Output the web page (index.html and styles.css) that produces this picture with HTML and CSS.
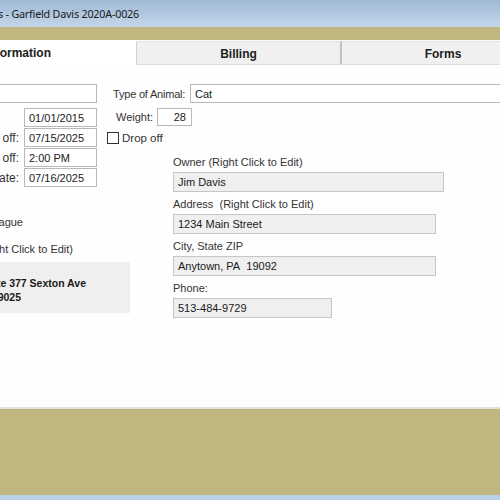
FILE: index.html
```html
<!DOCTYPE html>
<html>
<head>
<meta charset="utf-8">
<link rel="stylesheet" href="styles.css">
</head>
<body>
<div class="window">
  <div class="titlebar"><div class="title-wrap"><span class="title">Pet Records - Garfield Davis 2020A-0026</span></div></div>
  <div class="band"></div>
  <div class="tabs">
    <div class="tab active"><span class="tab-text">Pet Information</span></div>
    <div class="tab">Billing</div>
    <div class="tab last">Forms</div>
  </div>
  <div class="content">
    <div class="leftcol">
      <div class="box white wide"></div>
      <div class="dates">
        <div class="daterow"><span class="dlabel"></span><span class="box white date">01/01/2015</span></div>
        <div class="daterow"><span class="dlabel">Date of Drop off:</span><span class="box white date">07/15/2025</span></div>
        <div class="daterow"><span class="dlabel">Time of Drop off:</span><span class="box white date">2:00 PM</span></div>
        <div class="daterow"><span class="dlabel">Pickup Date:</span><span class="box white date">07/16/2025</span></div>
      </div>
      <div class="ltext league"><span>League</span></div>
      <div class="ltext vet"><span>Vet (Right Click to Edit)</span></div>
      <div class="vetbox">
        <div class="vline one"><span>Suite 377 Sexton Ave</span></div>
        <div class="vline two"><span>Horsham, PA 19025</span></div>
      </div>
    </div>
    <div class="rightcol">
      <div class="animalrow">
        <span class="label">Type of Animal:</span>
        <span class="box white animal">Cat</span>
      </div>
      <div class="weightrow">
        <span class="label">Weight:</span>
        <span class="box white weight">28</span>
      </div>
      <div class="droprow">
        <span class="check"></span>
        <span class="label">Drop off</span>
      </div>
      <div class="owner">
        <div class="group">
          <div class="label glabel">Owner (Right Click to Edit)</div>
          <div class="box gray long">Jim Davis</div>
        </div>
        <div class="group">
          <div class="label glabel">Address&nbsp; (Right Click to Edit)</div>
          <div class="box gray mid">1234 Main Street</div>
        </div>
        <div class="group">
          <div class="label glabel">City, State ZIP</div>
          <div class="box gray mid">Anytown, PA&nbsp; 19092</div>
        </div>
        <div class="group">
          <div class="label glabel">Phone:</div>
          <div class="box gray short">513-484-9729</div>
        </div>
      </div>
    </div>
  </div>
  <div class="footer"></div>
  <div class="taskbar"></div>
</div>
</body>
</html>
```
FILE: styles.css
```css
html, body {
  margin: 0;
  padding: 0;
  width: 500px;
  height: 500px;
  overflow: hidden;
  background: #ffffff;
}

.window {
  width: 500px;
  height: 500px;
  display: flex;
  flex-direction: column;
  font-family: "Liberation Sans", Arial, sans-serif;
  color: #1e1e1e;
}

.titlebar {
  height: 27px;
  flex: none;
  background: linear-gradient(#9fb9d5, #c4d6ea);
  display: flex;
  align-items: center;
  overflow: hidden;
}

.title-wrap {
  width: 139px;
  flex: none;
  display: flex;
  justify-content: flex-end;
}

.title {
  font-family: "Noto Sans", "Open Sans", sans-serif;
  font-size: 10.75px;
  letter-spacing: -0.2px;
  color: #1a1a1a;
  white-space: nowrap;
  flex: none;
  margin-top: 1px;
}

.band {
  height: 13px;
  flex: none;
  background: #c0b680;
}

.tabs {
  height: 25px;
  flex: none;
  display: flex;
  background: #fdfdfd;
  overflow: hidden;
}

.tab {
  width: 204px;
  flex: none;
  box-sizing: border-box;
  background: #f0f0f0;
  border-top: 1px solid #e4e4e4;
  border-bottom: 1px solid #dedede;
  border-left: 1px solid #d4d4cc;
  margin-top: 1px;
  font-size: 12px;
  font-weight: bold;
  color: #202020;
  display: flex;
  align-items: center;
  justify-content: center;
  padding-top: 2px;
}

.tab.last {
  border-left: 2px solid #c4c4b4;
}

.tab.active {
  width: 204px;
  margin-left: -68px;
  margin-top: 0;
  background: #ffffff;
  border: none;
  justify-content: flex-start;
  padding-top: 0;
}

.tab-text {
  width: 119px;
  flex: none;
  display: flex;
  justify-content: flex-end;
  white-space: nowrap;
}

.content {
  height: 342px;
  flex: none;
  background: #fefefe;
  display: flex;
  gap: 10px;
  padding-top: 19px;
  box-sizing: border-box;
}

.box {
  box-sizing: border-box;
  border: 1px solid #b9b9b9;
  font-size: 11px;
  color: #1a1a1a;
  display: flex;
  align-items: center;
  padding-left: 4px;
  white-space: nowrap;
}

.box.white {
  background: #ffffff;
}

.box.gray {
  background: #efefef;
  border-color: #c6c6c6;
}

.leftcol {
  width: 157px;
  margin-left: -60px;
  flex: none;
  display: flex;
  flex-direction: column;
}

.box.wide {
  height: 19px;
  width: 157px;
  margin-bottom: 5px;
}

.dates {
  display: flex;
  flex-direction: column;
  gap: 1px;
}

.daterow {
  display: flex;
  align-items: center;
}

.dlabel {
  width: 84px;
  flex: none;
  display: flex;
  justify-content: flex-end;
  font-size: 12px;
  color: #333;
  padding-right: 5px;
  box-sizing: border-box;
  white-space: nowrap;
}

.box.date {
  width: 73px;
  height: 19px;
}

.ltext {
  font-size: 11px;
  line-height: 14px;
  color: #333;
  white-space: nowrap;
  display: flex;
  justify-content: flex-end;
}

.ltext span, .vline span {
  flex: none;
}

.league {
  margin-top: 28px;
  width: 83px;
}

.vet {
  margin-top: 13px;
  width: 133px;
}

.vetbox {
  margin-top: 6px;
  width: 190px;
  height: 51px;
  background: #efefef;
  box-sizing: border-box;
  padding-top: 14px;
  flex: none;
}

.vline {
  font-size: 10.5px;
  font-weight: bold;
  line-height: 14px;
  color: #1a1a1a;
  white-space: nowrap;
  display: flex;
  justify-content: flex-end;
}

.vline.one {
  width: 146px;
}

.vline.two {
  width: 81px;
}

.rightcol {
  flex: none;
  width: 420px;
  display: flex;
  flex-direction: column;
}

.label {
  font-size: 11px;
  color: #333;
  white-space: nowrap;
}

.animalrow {
  display: flex;
  align-items: center;
  padding-left: 6px;
}

.animalrow .label {
  width: 77px;
  letter-spacing: -0.2px;
}

.box.animal {
  width: 330px;
  height: 19px;
}

.weightrow {
  display: flex;
  align-items: center;
  margin-top: 5px;
  padding-left: 9px;
}

.weightrow .label {
  width: 41px;
}

.box.weight {
  width: 35px;
  height: 18px;
  justify-content: flex-end;
  padding-left: 0;
  padding-right: 5px;
}

.droprow {
  display: flex;
  align-items: center;
  margin-top: 6px;
  gap: 3px;
}

.check {
  width: 12px;
  height: 12px;
  box-sizing: border-box;
  border: 1px solid #333;
  background: #fff;
}

.droprow .label {
  font-size: 11.5px;
}

.owner {
  margin-top: 11px;
  margin-left: 66px;
  display: flex;
  flex-direction: column;
  gap: 5px;
}

.group {
  display: flex;
  flex-direction: column;
}

.glabel {
  line-height: 14px;
  margin-bottom: 3px;
}

.box.long {
  width: 271px;
  height: 20px;
}

.box.mid {
  width: 263px;
  height: 20px;
}

.box.short {
  width: 159px;
  height: 20px;
}

.footer {
  flex: none;
  height: 85px;
  background: #c0b680;
  border-top: 2px solid #e2e2d6;
  border-bottom: 1px solid #c8b884;
}

.taskbar {
  flex: 1;
  background: #b8d0e8;
}
```
